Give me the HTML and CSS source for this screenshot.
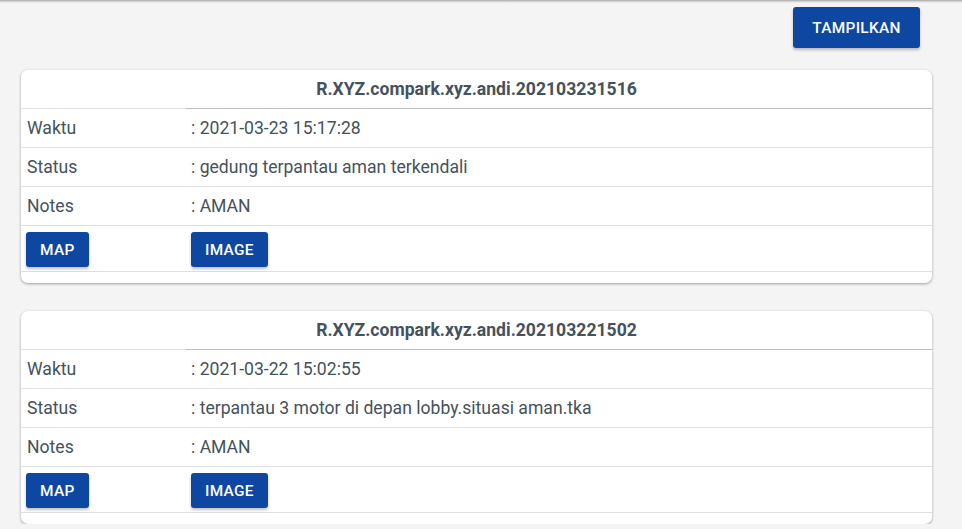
FILE: index.html
```html
<!DOCTYPE html>
<html>
<head>
<meta charset="utf-8">
<link rel="stylesheet" href="styles.css">
</head>
<body>
<div class="topbar"></div>
<div class="toolbar">
  <button class="btn btn-lg">TAMPILKAN</button>
</div>
<div class="list">
  <div class="card">
    <div class="card-title">R.XYZ.compark.xyz.andi.202103231516</div>
    <div class="row first">
      <div class="cell label">Waktu</div>
      <div class="cell value">: 2021-03-23 15:17:28</div>
    </div>
    <div class="row">
      <div class="cell label">Status</div>
      <div class="cell value">: gedung terpantau aman terkendali</div>
    </div>
    <div class="row">
      <div class="cell label">Notes</div>
      <div class="cell value">: AMAN</div>
    </div>
    <div class="row actions">
      <div class="cell label"><button class="btn">MAP</button></div>
      <div class="cell value"><button class="btn">IMAGE</button></div>
    </div>
  </div>
  <div class="card">
    <div class="card-title">R.XYZ.compark.xyz.andi.202103221502</div>
    <div class="row first">
      <div class="cell label">Waktu</div>
      <div class="cell value">: 2021-03-22 15:02:55</div>
    </div>
    <div class="row">
      <div class="cell label">Status</div>
      <div class="cell value">: terpantau 3 motor di depan lobby.situasi aman.tka</div>
    </div>
    <div class="row">
      <div class="cell label">Notes</div>
      <div class="cell value">: AMAN</div>
    </div>
    <div class="row actions">
      <div class="cell label"><button class="btn">MAP</button></div>
      <div class="cell value"><button class="btn">IMAGE</button></div>
    </div>
  </div>
</div>
</body>
</html>
```
FILE: styles.css
```css
html, body {
  margin: 0;
  padding: 0;
  background: #f4f4f4;
  font-family: Roboto, "Liberation Sans", sans-serif;
  color: #45525c;
}
.topbar {
  height: 3px;
  background: linear-gradient(#a8a8a8, #dcdcdc 60%, #f4f4f4);
}
.toolbar {
  display: flex;
  justify-content: flex-end;
  padding: 4px 42px 0 0;
}
.btn {
  background: #0d47a1;
  color: #fff;
  border: none;
  border-radius: 3px;
  font-family: Roboto, "Liberation Sans", sans-serif;
  font-size: 15.4px;
  font-weight: 500;
  letter-spacing: 0.3px;
  height: 35px;
  padding: 0 14px;
  box-shadow: 0 2px 3px rgba(0,0,0,0.25);
  cursor: pointer;
}
.btn-lg {
  height: 41px;
  width: 127px;
  padding: 0;
}
.list {
  display: flex;
  flex-direction: column;
  gap: 28px;
  padding: 22px 30px 0 21px;
}
.card {
  background: #fff;
  border-radius: 7px;
  box-shadow: 0 1px 3px rgba(0,0,0,0.35);
  padding-bottom: 11px;
}
.card-title {
  height: 38px;
  line-height: 38px;
  text-align: center;
  font-weight: 700;
  font-size: 17.6px;
  color: #45525c;
}
.row {
  display: grid;
  grid-template-columns: 165px 1fr;
  height: 38px;
  border-bottom: 1px solid #e0e0e0;
  font-size: 17.6px;
}
.row.first {
  border-top: 1px solid #e0e0e0;
}
.row.first .value {
  box-shadow: 0 -1px 0 #bdbdbd;
}
.cell {
  display: flex;
  align-items: center;
  padding-left: 6px;
}
.value {
  padding-left: 5px;
}
.row.actions {
  height: 45px;
}
.row.actions .cell {
  align-items: flex-start;
  padding-top: 6px;
  padding-left: 5px;
}
```
